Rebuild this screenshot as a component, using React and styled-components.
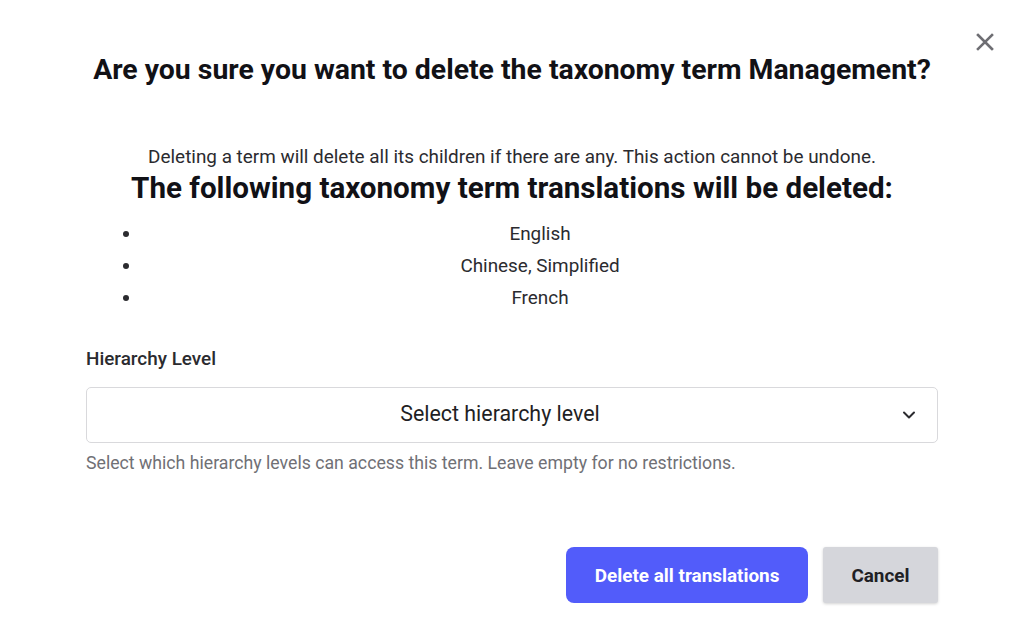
import React from "react";
import styled, { createGlobalStyle } from "styled-components";

const GlobalStyle = createGlobalStyle`
  html, body {
    margin: 0;
    padding: 0;
    background: #ffffff;
    font-family: Roboto, "Liberation Sans", sans-serif;
    color: #1f1f24;
  }
`;

const Modal = styled.div`
  position: relative;
  width: 1024px;
  height: 644px;
  box-sizing: border-box;
  padding: 50px 86px 0;
  display: flex;
  flex-direction: column;
`;

const CloseButton = styled.button`
  position: absolute;
  top: 30px;
  right: 27px;
  width: 24px;
  height: 24px;
  padding: 0;
  border: none;
  background: transparent;
  cursor: pointer;
  display: flex;
  align-items: center;
  justify-content: center;
`;

const Title = styled.h1`
  margin: 0;
  text-align: center;
  font-size: 28.4px;
  line-height: 40px;
  font-weight: 700;
  color: #111116;
`;

const Body = styled.div`
  margin-top: 54px;
  text-align: center;
`;

const Description = styled.p`
  margin: 0;
  font-size: 18.9px;
  line-height: 26px;
  color: #2b2b2f;
`;

const SubHeading = styled.h2`
  margin: 0;
  font-size: 29.6px;
  line-height: 36px;
  font-weight: 700;
  color: #111116;
`;

const List = styled.ul`
  margin: 12px 0 0;
  padding-left: 56px;
  list-style: disc;
`;

const Item = styled.li`
  font-size: 18.9px;
  line-height: 32px;
  color: #2b2b2f;
`;

const Field = styled.div`
  margin-top: 32px;
  display: flex;
  flex-direction: column;
`;

const Label = styled.label`
  font-size: 18.9px;
  line-height: 26px;
  font-weight: 500;
  color: #2b2b2f;
`;

const Select = styled.div`
  margin-top: 15px;
  height: 56px;
  box-sizing: border-box;
  border: 1px solid #d9d9dc;
  border-radius: 5px;
  display: flex;
  align-items: center;
  padding: 0 20px 0 12px;
`;

const SelectValue = styled.span`
  flex: 1;
  text-align: center;
  font-size: 21.4px;
  line-height: 26px;
  padding-bottom: 3px;
  color: #1f1f24;
`;

const HelpText = styled.p`
  margin: 8px 0 0;
  font-size: 17.7px;
  line-height: 24px;
  color: #707075;
`;

const Actions = styled.div`
  margin-top: 72px;
  display: flex;
  justify-content: flex-end;
  gap: 15px;
`;

const Button = styled.button`
  height: 56px;
  border: none;
  font-family: inherit;
  font-size: 18.9px;
  font-weight: 700;
  cursor: pointer;
  padding: 0 28.5px;
  border-radius: ${(p) => (p.$kind === "primary" ? "8px" : "3px")};
  background: ${(p) => (p.$kind === "primary" ? "#525cfa" : "#d5d6db")};
  color: ${(p) => (p.$kind === "primary" ? "#ffffff" : "#1f1f24")};
  box-shadow: ${(p) =>
    p.$kind === "primary" ? "none" : "0 1px 3px rgba(0, 0, 0, 0.18)"};
`;

const languages = ["English", "Chinese, Simplified", "French"];

export default function App() {
  return (
    <>
      <GlobalStyle />
      <Modal>
        <CloseButton aria-label="Close">
          <svg width="18" height="18" viewBox="0 0 18 18">
            <path
              d="M2 2 L16 16 M16 2 L2 16"
              stroke="#6e6e73"
              strokeWidth="2.6"
              strokeLinecap="square"
            />
          </svg>
        </CloseButton>
        <Title>Are you sure you want to delete the taxonomy term Management?</Title>
        <Body>
          <Description>
            Deleting a term will delete all its children if there are any. This
            action cannot be undone.
          </Description>
          <SubHeading>The following taxonomy term translations will be deleted:</SubHeading>
          <List>
            {languages.map((lang) => (
              <Item key={lang}>{lang}</Item>
            ))}
          </List>
        </Body>
        <Field>
          <Label>Hierarchy Level</Label>
          <Select>
            <SelectValue>Select hierarchy level</SelectValue>
            <svg width="16" height="16" viewBox="0 0 16 16">
              <path
                d="M3 5.5 L8 10.5 L13 5.5"
                fill="none"
                stroke="#2b2b2f"
                strokeWidth="2"
                strokeLinecap="round"
                strokeLinejoin="round"
              />
            </svg>
          </Select>
          <HelpText>
            Select which hierarchy levels can access this term. Leave empty for no
            restrictions.
          </HelpText>
        </Field>
        <Actions>
          <Button $kind="primary">Delete all translations</Button>
          <Button>Cancel</Button>
        </Actions>
      </Modal>
    </>
  );
}
